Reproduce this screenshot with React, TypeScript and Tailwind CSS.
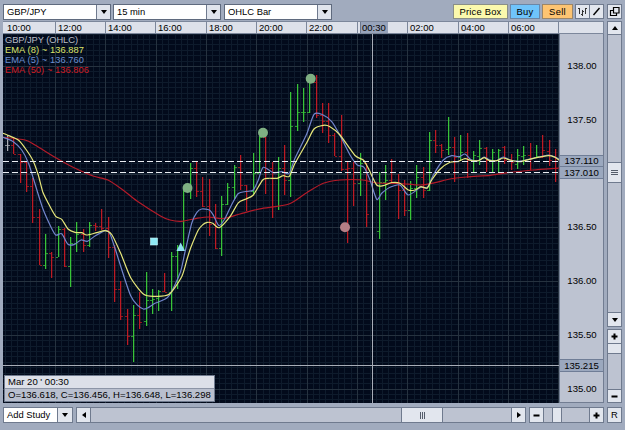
import React from "react";

type Bar = [number, number, number, "g" | "r" | "w", number?, number?];

// x, high, low, colour, open (left tick), close (right tick)
const BARS: Bar[] = [
  [7, 135, 151, "w", 145, 145], [13.6, 137, 154, "r", 145, 154], [20.3, 154, 183, "r", 154, 162], [26.6, 161, 192, "r", 162, 186],
  [32.6, 178, 223, "r", 186, 217], [39, 209, 265, "r", 217, 265], [45.6, 234, 269, "g", 265, 253], [51.4, 252, 278, "r", 253, 257],
  [58, 226, 257, "g", 257, 229], [64.3, 228, 267, "r", 229, 266], [70.5, 237, 287, "g", 266, 243], [76.6, 222, 252, "g", 243, 234],
  [83, 229, 252, "r", 234, 245], [89.4, 222, 247, "g", 245, 225], [95.6, 223, 231, "r", 225, 226], [101.8, 209, 230, "r", 226, 228],
  [108.4, 217, 258, "r", 228, 247], [114.5, 245, 302, "r", 247, 289], [120.7, 281, 320, "r", 289, 316], [127.3, 309, 345, "r", 316, 336],
  [133.5, 305, 362, "g", 336, 315], [139.6, 292, 329, "r", 315, 322], [146.2, 272, 326, "g", 321, 300], [152.4, 289, 314, "g", 300, 299],
  [158.6, 290, 311, "g", 298, 291], [164.8, 273, 292, "r", 291, 292], [171.5, 252, 311, "g", 292, 256], [177.5, 245, 289, "g", 256, 249],
  [183.6, 187, 250, "g", 249, 188], [190.4, 163, 199, "g", 188, 168], [196.6, 162, 197, "r", 168, 191], [202.6, 177, 207, "r", 191, 206],
  [209.3, 179, 236, "r", 206, 224], [215.4, 204, 249, "r", 224, 248], [221.5, 196, 256, "g", 248, 204], [227.6, 183, 205, "g", 204, 187],
  [234.4, 165, 199, "g", 187, 167], [240.4, 155, 190, "r", 167, 185], [246.6, 185, 211, "r", 185, 191], [253.3, 153, 194, "g", 191, 173],
  [259.4, 136, 173, "g", 173, 137], [265.6, 137, 194, "r", 137, 168], [272.3, 162, 218, "r", 168, 178], [278.4, 157, 210, "g", 178, 168],
  [284.5, 145, 195, "r", 168, 180], [290.6, 92, 197, "g", 180, 126], [297.3, 84, 131, "g", 126, 112], [303.5, 88, 122, "g", 112, 112],
  [309.5, 76, 113, "g", 112, 82], [316.4, 75, 118, "r", 82, 115], [322.4, 103, 133, "r", 115, 121], [328.5, 103, 143, "r", 121, 135],
  [334.6, 133, 156, "r", 135, 156], [341.3, 115, 171, "r", 156, 169], [347.4, 162, 243, "r", 169, 168], [353.5, 162, 206, "r", 168, 183],
  [360.4, 153, 196, "g", 183, 163], [366.4, 163, 227, "r", 163, 214], [379.3, 172, 239, "g", 231, 182], [385.4, 165, 200, "g", 182, 180],
  [391.6, 159, 183, "r", 180, 182], [398.3, 174, 219, "r", 182, 190], [404.4, 180, 216, "r", 190, 210], [410.5, 181, 220, "g", 210, 188],
  [416.6, 165, 198, "g", 188, 177], [423.3, 167, 198, "r", 177, 190], [429.4, 132, 191, "g", 190, 140], [435.6, 130, 153, "r", 140, 145],
  [441.6, 144, 158, "r", 145, 150], [448.4, 117, 155, "g", 149, 147], [454.5, 137, 182, "r", 147, 157], [460.6, 135, 160, "g", 157, 152],
  [467.3, 133, 178, "r", 152, 160], [473.4, 151, 173, "g", 160, 155], [479.5, 140, 165, "g", 156, 148], [486.4, 147, 172, "r", 148, 160],
  [492.4, 149, 172, "g", 160, 152], [498.5, 149, 172, "g", 160, 150], [504.6, 146, 164, "r", 147, 160], [511.3, 154, 170, "r", 160, 162],
  [517.5, 149, 169, "g", 164, 155], [523.6, 146, 165, "g", 156, 155], [530.4, 143, 170, "r", 155, 158], [536.4, 145, 158, "g", 157, 156],
  [542.6, 135, 158, "r", 157, 150], [549.3, 140, 166, "r", 151, 160], [555.4, 149, 182, "r", 168, 168],
];

const EMA8: number[][] = [[3, 133.3], [7.3, 135], [18.3, 140], [25, 148], [32.7, 160], [38.3, 175], [42.7, 191.7], [48.3, 203.3], [55.7, 216.3], [61.7, 219.3], [68.3, 229.3], [75, 232.3], [81.7, 232.7], [86.7, 235], [96.7, 232.7], [105, 230.7], [111.7, 234.5], [120.7, 253.3], [130.7, 277.7], [143.7, 294.3], [155, 296.3], [169, 294.3], [181.7, 276.7], [187.3, 258.3], [191, 247], [198.3, 230], [203, 224.5], [207.3, 222.3], [212.7, 223.3], [219.3, 227.7], [230, 216.7], [238.3, 202.8], [246, 199], [253.3, 195], [262.7, 180], [268.3, 178.3], [277, 178.3], [283.3, 175.7], [289.3, 176.3], [295, 163.3], [306.7, 142.7], [314, 129], [323.3, 125.3], [330, 126.7], [340, 135], [355, 155.5], [363.3, 160], [368.3, 168.3], [376.7, 185], [383.3, 185.7], [391.7, 182.5], [400, 183.3], [408.3, 190], [415, 190], [420.7, 186.7], [427.3, 188], [431.7, 180], [440, 169.3], [450, 162.3], [458.3, 161.3], [465, 158.7], [471.7, 160.7], [478.3, 160.7], [484, 157.7], [489, 160.3], [496.7, 160.7], [503.3, 158], [510, 160], [520, 161.7], [533.3, 158.3], [548.3, 155.7], [555, 157.3], [559, 160]];
const EMA5: number[][] = [[3, 137.3], [13.3, 141.7], [21.7, 150], [28.3, 162.7], [33.3, 178.3], [42.7, 208.3], [50, 225], [55.7, 235], [61.7, 233.7], [67.7, 244], [74, 244.7], [81, 240], [87.3, 241.3], [95, 236], [105.7, 230.3], [110, 234], [115, 248.3], [130.7, 295.7], [143.3, 309], [155, 303.3], [168.3, 296.7], [180, 273.3], [185, 252], [191.7, 223.3], [196.7, 212.7], [201.7, 209], [209.3, 210], [213.3, 215], [219, 225.7], [225, 218.5], [232, 204], [238.3, 193.5], [246, 191.5], [253.3, 190], [258.3, 180], [263.3, 167.3], [273.3, 172.7], [281.7, 171.7], [289, 173.3], [295, 158.3], [306.7, 134], [314, 114.3], [321.7, 114.3], [331.7, 121.7], [340.7, 136.7], [350, 155], [357.3, 165], [364, 167.3], [370, 180], [376.7, 199.3], [381.7, 193.3], [390, 187.3], [400, 185], [408.3, 195], [420.7, 187.3], [427.3, 187.7], [433.3, 175], [443.3, 160], [451.7, 155.7], [459.3, 156.7], [465, 154], [470.7, 159.5], [478.3, 160.7], [484, 157], [489, 159.7], [496.7, 160.7], [503.3, 157], [510, 160], [520, 161.2], [533.3, 158.3], [548.3, 155], [555, 157], [559, 159]];
const EMA50: number[][] = [[3, 137.3], [25, 140], [35, 145], [55, 157.3], [73, 167.3], [93, 176], [108, 180], [123, 190], [137, 201], [160, 215.7], [170, 220], [181.7, 221.3], [196.7, 218.3], [208.3, 217], [223.3, 218.5], [240, 214], [260, 208.8], [289, 204], [306.7, 192.7], [323.3, 183.3], [340, 180], [363, 180], [376.7, 183], [400, 183.5], [420, 185], [435, 182.7], [450, 179], [466.7, 177], [490, 175.3], [503, 173.3], [533, 170], [559, 168]];

// Catmull-Rom spline through the points
const curve = (p: number[][]) => {
  let d = `M${p[0][0]} ${p[0][1]}`;
  for (let i = 0; i < p.length - 1; i++) {
    const a = p[Math.max(0, i - 1)], b = p[i], c = p[i + 1], e = p[Math.min(p.length - 1, i + 2)];
    const f = (n: number) => n.toFixed(1);
    d += `C${f(b[0] + (c[0] - a[0]) / 8)} ${f(b[1] + (c[1] - a[1]) / 8)} ${f(c[0] - (e[0] - b[0]) / 8)} ${f(c[1] - (e[1] - b[1]) / 8)} ${c[0]} ${c[1]}`;
  }
  return d;
};

const COLOR = { g: "#38c438", r: "#bd1a23", w: "#a9adb5" };
const range = (n: number) => Array.from({ length: n }, (_, i) => i);

const Chart = () => (
  <svg viewBox="3 34 556 369" className="block h-[369px] w-[556px] bg-[#020a1b]" fontFamily="Liberation Sans, Arial, sans-serif">
    <g stroke="#0e1b2c" shapeRendering="crispEdges">
      {range(89).map((i) => <line key={i} x1={5.2 + i * 6.29} x2={5.2 + i * 6.29} y1="34" y2="403" />)}
      {range(70).map((i) => <line key={i} y1={34.1 + i * 5.38} y2={34.1 + i * 5.38} x1="3" x2="559" />)}
    </g>
    <g stroke="#26323f" shapeRendering="crispEdges">
      {range(11).map((i) => <line key={i} x1={55.5 + i * 50.33} x2={55.5 + i * 50.33} y1="34" y2="403" />)}
      {range(7).map((i) => <line key={i} y1={66.4 + i * 53.8} y2={66.4 + i * 53.8} x1="3" x2="559" />)}
    </g>
    <g>
      {BARS.map(([x, t, b, c, o, k], i) => {
        const px = Math.floor(x);
        return (
          <g key={i} fill={COLOR[c]}>
            <rect x={px} y={t} width="1.25" height={b - t} />
            {o !== undefined && <rect x={px - 2} y={o} width="2" height="1" opacity=".75" />}
            {k !== undefined && <rect x={px + 1} y={k} width="2" height="1" opacity=".75" />}
          </g>
        );
      })}
    </g>
    <g fill="none">
      <path d={curve(EMA50)} stroke="#b51b29" strokeWidth="1.2" />
      <path d={curve(EMA5)} stroke="#7285cc" strokeWidth="1.2" />
      <path d={curve(EMA8)} stroke="#e6e67a" strokeWidth="1.2" />
    </g>
    <g stroke="#e9edf2" strokeDasharray="6 3" shapeRendering="crispEdges">
      <line x1="3" x2="559" y1="161.5" y2="161.5" />
      <line x1="3" x2="559" y1="172.5" y2="172.5" />
    </g>
    <g stroke="#a8adb8" shapeRendering="crispEdges">
      <line x1="3" x2="559" y1="365.5" y2="365.5" />
      <line x1="372.5" x2="372.5" y1="34" y2="403" />
    </g>
    <circle cx="187.5" cy="188" r="5" fill="#7fb083" />
    <circle cx="263" cy="132.7" r="5" fill="#7fb083" />
    <circle cx="310.7" cy="78.7" r="5" fill="#7fb083" />
    <circle cx="345" cy="227.3" r="5" fill="#b57f86" />
    <rect x="150.5" y="238" width="7" height="7" fill="#8fe9f5" stroke="#c5f6fb" strokeWidth=".6" />
    <path d="M180.7 242.5l4.3 8.500h-8.6z" fill="#8fe0f0" />
    <g fontSize="9.3">
      <text x="5" y="42.5" fill="#b9bec8" textLength="73">GBP/JPY (OHLC)</text>
      <text x="5" y="52.5" fill="#dde36a" textLength="79">EMA (8) ~ 136.887</text>
      <text x="5" y="62.5" fill="#6c8fd0" textLength="79">EMA (5) ~ 136.760</text>
      <text x="5" y="72.5" fill="#d01e26" textLength="84">EMA (50) ~ 136.806</text>
    </g>
  </svg>
);

const Arrow = ({ d = "down" }: { d?: "down" | "up" | "left" | "right" }) => (
  <svg viewBox="0 0 8 8" className="size-2 shrink-0" fill="#000">
    <path d={{ down: "M1 2h6L4 6z", up: "M1 6h6L4 2z", left: "M6 1v6L2 4z", right: "M2 1v6l4-3z" }[d]} />
  </svg>
);
const Plus = () => <svg viewBox="0 0 7 7" className="size-[7px]" stroke="#000" strokeWidth="2"><path d="M.5 3.5h6M3.5.5v6" /></svg>;
const Minus = () => <svg viewBox="0 0 7 7" className="size-[7px]" stroke="#000" strokeWidth="2"><path d="M.5 3.5h6" /></svg>;

const Combo = ({ text }: { text: string }) => (
  <div className="flex h-4 w-[108px] border border-[#5f6a7e] bg-white">
    <div className="flex flex-1 items-center pl-[3px]">{text}</div>
    <div className="flex w-[14px] items-center justify-center border-l border-[#6f7a8e] bg-[#e0e4ec]"><Arrow /></div>
  </div>
);

const box = "flex shrink-0 items-center justify-center bg-[#e2e6ee]";

export default function App() {
  const times = ["10:00", "12:00", "14:00", "16:00", "18:00", "20:00", "22:00", "", "02:00", "04:00", "06:00"];
  const widths = ["w-[53px]", "w-[50px]", "w-[50px]", "w-[51px]", "w-[50px]", "w-[50px]", "w-[51px]", "w-[50px]", "w-[51px]", "w-[50px]", "w-[50px]"];
  const prices = ["138.00", "137.50", "", "136.50", "136.00", "135.50", "135.00"];
  return (
    <div className="flex h-[430px] w-[625px] flex-col overflow-hidden bg-[#a1abbe] pl-[3px] pr-[3px] pt-[3px] font-['Liberation_Sans',Arial,sans-serif] text-[9.4px] leading-none text-black">
      <div className="flex h-[18px] items-start pt-px">
        <Combo text="GBP/JPY" />
        <div className="ml-[2px]"><Combo text="15 min" /></div>
        <div className="ml-[3px]"><Combo text="OHLC Bar" /></div>
        <div className="ml-[121px] flex h-[15px] w-[55px] items-center justify-center border border-[#8a8f87] bg-[#fbf9ad] tracking-[0.2px]">Price Box</div>
        <div className="ml-[2px] flex h-[15px] w-[30px] items-center justify-center border border-[#6c87a6] bg-[#6fc4fb] tracking-[0.2px]">Buy</div>
        <div className="ml-[2px] flex h-[15px] w-[31px] items-center justify-center border border-[#9c8668] bg-[#fdc472] tracking-[0.3px]">Sell</div>
        <div className="ml-[2px] flex h-[15px] w-[29px] border border-[#6f7a8e] bg-[#e2e6ee]">
          <div className="flex flex-1 items-center justify-center border-r border-[#6f7a8e]">
            <svg viewBox="0 0 11 10" className="h-[10px] w-[11px]" stroke="#333" fill="none"><path d="M2.500 1v6M1 1.500h1.500M5.500 3v6M4 7.500h1.500M5.500 4.500H7M8.500 1v6M8.500 1.500H10" /></svg>
          </div>
          <div className="flex flex-1 items-center justify-center">
            <svg viewBox="0 0 9 9" className="size-[9px]" stroke="#000" strokeWidth="1.400"><path d="M1.500 8l6-7" /></svg>
          </div>
        </div>
        <div className="ml-[3px] flex h-[15px] w-[15px] items-center justify-center border border-[#6f7a8e] bg-[#e2e6ee]">
          <svg viewBox="0 0 11 11" className="size-[11px]" stroke="#000" strokeWidth="1.200" fill="#e2e6ee"><path d="M1.500 4.500h6v5h-6z" /><path d="M4.500 1.500h5.500v5.500H4.500z" /></svg>
        </div>
      </div>

      <div className="flex h-[382px]">
        <div className="w-[601px]">
          <div className="flex h-[13px] border-y border-[#7c879b] bg-[#dde1ea]">
            {times.map((t, i) => (
              <div key={i} className={`${widths[i]} shrink-0 border-r border-[#7c879b] ${i === 0 ? "pl-[4px]" : "pl-[2px]"} flex items-center text-[9.5px]`}>
                {i === 7 ? <div className="flex h-full w-[28px] items-center border-l border-[#6b768e] bg-[#97a3ba] pl-px">00:30</div> : t}
              </div>
            ))}
            <div className="flex-1 border-r border-[#7c879b]" />
          </div>
          <div className="flex h-[369px]">
            <div className="relative w-[556px]">
              <Chart />
              <div className="absolute bottom-[1px] left-[1px] w-[211px] border border-[#6f7a8e] bg-[#b9bfce] text-[9.550px]">
                <div className="flex h-[12px] items-center bg-[#dcdfe8] pl-[3px]">Mar 20 &apos; 00:30</div>
                <div className="flex h-[13px] items-center whitespace-nowrap border-t border-[#8c94a6] pl-[3px]">O=136.618, C=136.456, H=136.648, L=136.298</div>
              </div>
            </div>
            <div className="relative flex w-[45px] flex-col border-b border-l border-r border-[#727d92] bg-[#bdc3d1] pt-[5px] text-[9.600px]">
              {prices.map((p, i) => <div key={i} className="flex h-[53.8px] shrink-0 items-center justify-center pl-px">{p}</div>)}
              <div className="absolute inset-x-0 top-[121px] flex h-[12px] items-center justify-center border-y border-[#6f7d96] bg-[#9ba8be]">137.110</div>
              <div className="absolute inset-x-0 top-[132px] flex h-[13px] items-center justify-center border-y border-[#6f7d96] bg-[#9ba8be]">137.010</div>
              <div className="absolute inset-x-0 top-[325px] flex h-[13px] items-center justify-center border-y border-[#6f7d96] bg-[#9ba8be]">135.215</div>
            </div>
          </div>
        </div>
        <div className="ml-[3px] flex w-[15px] flex-col">
          <div className="flex h-[306px] flex-col border border-[#6f7a8e] bg-[#bdc3d1]">
            <div className={`${box} h-[13px] border-b border-[#6f7a8e]`}><Arrow d="up" /></div>
            <div className="h-[127px]" />
            <div className={`${box} h-[21px] border-y border-[#6f7a8e]`}>
              <svg viewBox="0 0 7 6" className="h-[6px] w-[7px]" stroke="#555d6b"><path d="M0 .5h7M0 2.500h7M0 4.500h7" /></svg>
            </div>
            <div className="flex-1" />
            <div className={`${box} h-[14px] border-t border-[#6f7a8e]`}><Arrow /></div>
          </div>
          <div className="mt-[2px] flex flex-1 flex-col border border-[#6f7a8e] bg-[#bdc3d1]">
            <div className={`${box} h-[14px] border-b border-[#6f7a8e]`}><Plus /></div>
            <div className="h-[10px] border-b border-[#6f7a8e] bg-[#e2e6ee]" />
            <div className="flex-1" />
            <div className={`${box} h-[13px] border-t border-[#6f7a8e]`}><Minus /></div>
          </div>
        </div>
      </div>

      <div className="mt-[4px] flex h-4">
        <div className="flex w-[70px] border border-[#6f7a8e] bg-white">
          <div className="flex flex-1 items-center whitespace-nowrap pl-[3px]">Add Study</div>
          <div className={`${box} w-[15px] border-l border-[#6f7a8e]`}><Arrow /></div>
        </div>
        <div className="ml-[3px] flex w-[450px] border border-[#6f7a8e] bg-[#bdc3d1]">
          <div className={`${box} w-[14px] border-r border-[#6f7a8e]`}><Arrow d="left" /></div>
          <div className="w-[310px]" />
          <div className={`${box} w-[42px] border-x border-[#6f7a8e]`}>
            <svg viewBox="0 0 5 7" className="h-[7px] w-[5px]" stroke="#555d6b"><path d="M.5 0v7M2.500 0v7M4.500 0v7" /></svg>
          </div>
          <div className="flex-1" />
          <div className={`${box} w-[14px] border-l border-[#6f7a8e]`}><Arrow d="right" /></div>
        </div>
        <div className="ml-[3px] flex w-[75px] border border-[#6f7a8e] bg-[#bdc3d1]">
          <div className={`${box} w-[14px] border-r border-[#6f7a8e]`}><Minus /></div>
          <div className="w-[8px]" />
          <div className="w-[10px] border-x border-[#6f7a8e] bg-[#e2e6ee]" />
          <div className="flex-1" />
          <div className={`${box} w-[14px] border-l border-[#6f7a8e]`}><Plus /></div>
        </div>
        <div className="ml-[3px] flex w-[15px] items-center justify-center border border-[#6f7a8e] bg-[#e2e6ee]">R</div>
      </div>
    </div>
  );
}
